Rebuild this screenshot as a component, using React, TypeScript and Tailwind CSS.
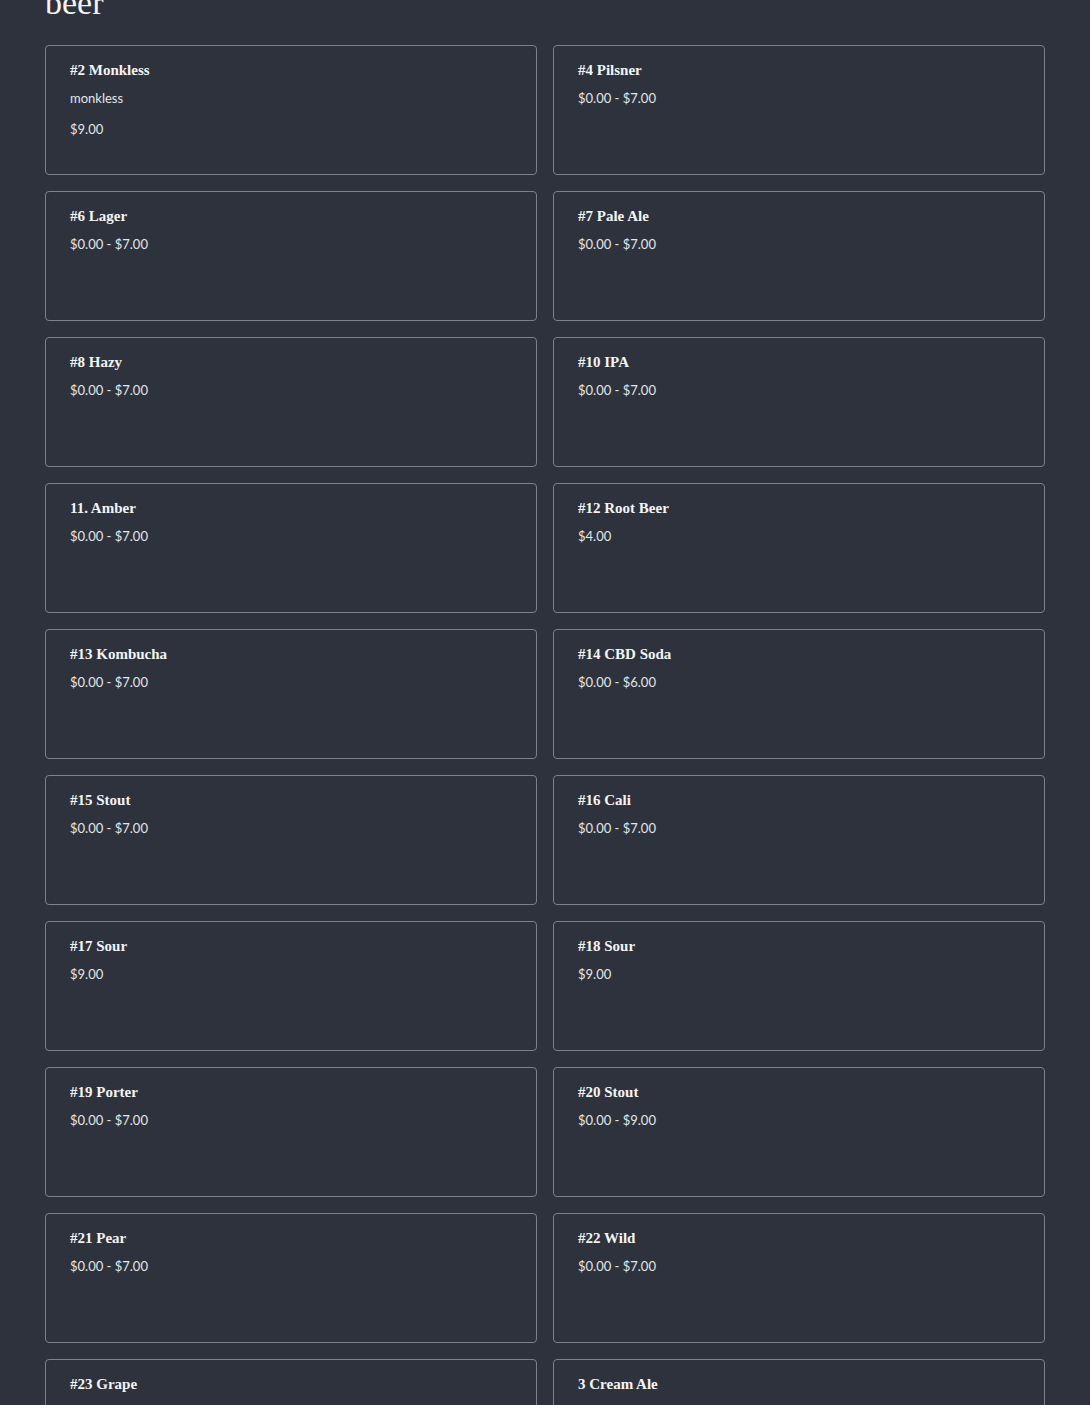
import React from 'react'

type Item = {
  name: string
  description?: string
  price: string
}

const ITEMS: Item[] = [
  { name: '#2 Monkless', description: 'monkless', price: '$9.00' },
  { name: '#4 Pilsner', price: '$0.00 - $7.00' },
  { name: '#6 Lager', price: '$0.00 - $7.00' },
  { name: '#7 Pale Ale', price: '$0.00 - $7.00' },
  { name: '#8 Hazy', price: '$0.00 - $7.00' },
  { name: '#10 IPA', price: '$0.00 - $7.00' },
  { name: '11. Amber', price: '$0.00 - $7.00' },
  { name: '#12 Root Beer', price: '$4.00' },
  { name: '#13 Kombucha', price: '$0.00 - $7.00' },
  { name: '#14 CBD Soda', price: '$0.00 - $6.00' },
  { name: '#15 Stout', price: '$0.00 - $7.00' },
  { name: '#16 Cali', price: '$0.00 - $7.00' },
  { name: '#17 Sour', price: '$9.00' },
  { name: '#18 Sour', price: '$9.00' },
  { name: '#19 Porter', price: '$0.00 - $7.00' },
  { name: '#20 Stout', price: '$0.00 - $9.00' },
  { name: '#21 Pear', price: '$0.00 - $7.00' },
  { name: '#22 Wild', price: '$0.00 - $7.00' },
  { name: '#23 Grape', price: '$0.00 - $7.00' },
  { name: '3 Cream Ale', price: '$0.00 - $7.00' },
]

function ItemCard({ item }: { item: Item }) {
  return (
    <div className="h-[130px] rounded border border-[#7c8088] px-6 pt-[14px]">
      <h3 className="font-['Liberation_Serif',serif] text-[15px] font-bold leading-5 text-[#f4f4f5]">
        {item.name}
      </h3>
      {item.description && (
        <p className="mt-2 font-['Lato',sans-serif] text-[13px] leading-5 text-[#e4e5e7]">
          {item.description}
        </p>
      )}
      <p
        className={`font-['Lato',sans-serif] text-[13px] leading-5 text-[#e4e5e7] ${
          item.description ? 'mt-[11px]' : 'mt-2'
        }`}
      >
        {item.price}
      </p>
    </div>
  )
}

export default function App() {
  return (
    <div className="min-h-screen bg-[#2d323c] px-[45px] pb-10">
      <h1 className="mt-[-17px] mb-[22px] font-['Liberation_Serif',serif] text-[34px] leading-10 text-[#f4f4f5]">
        beer
      </h1>
      <div className="grid grid-cols-2 gap-4">
        {ITEMS.map((item) => (
          <ItemCard key={item.name} item={item} />
        ))}
      </div>
    </div>
  )
}
